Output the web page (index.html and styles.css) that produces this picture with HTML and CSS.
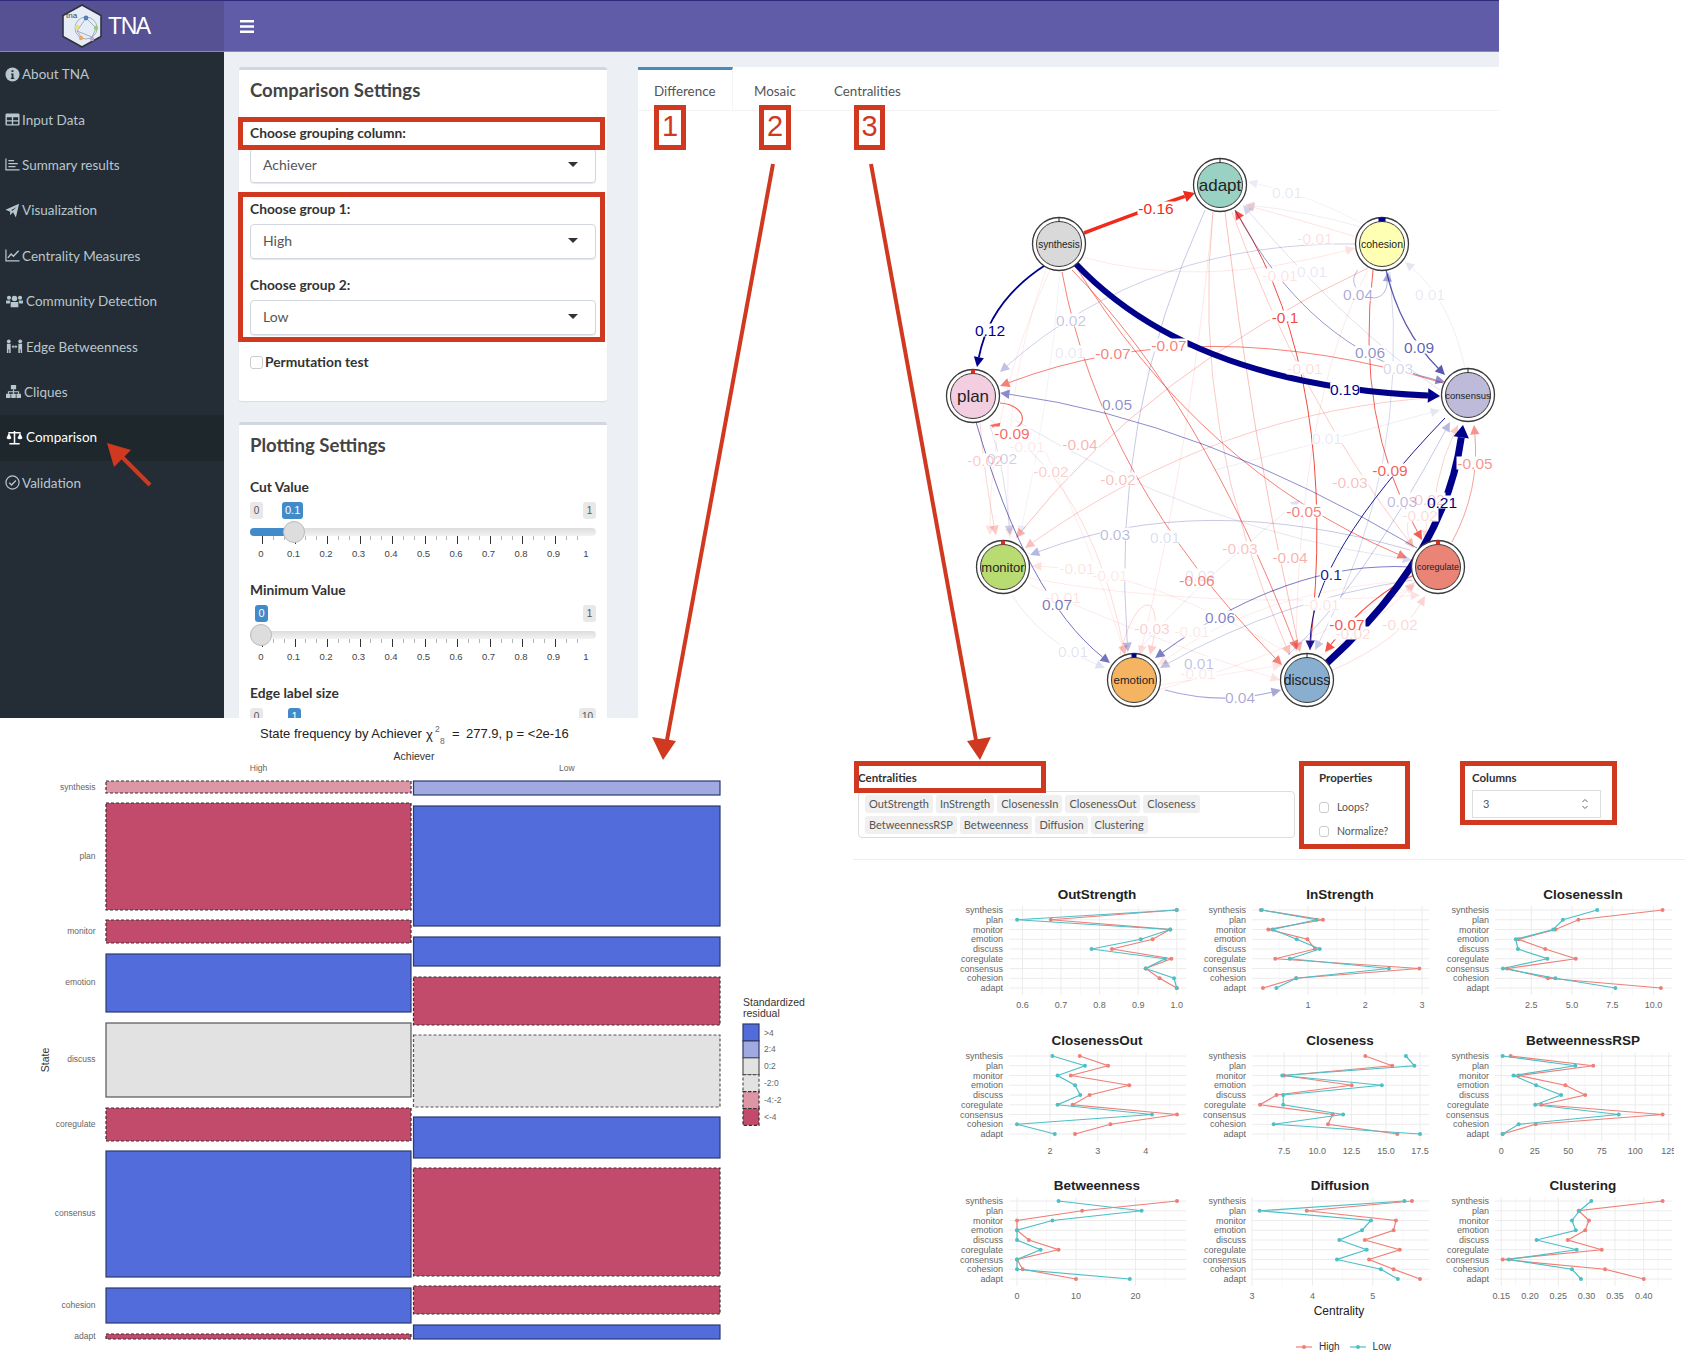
FILE: index.html
```html
<!DOCTYPE html>
<html lang="en">
<head>
  <meta charset="UTF-8">
  <title>TNA - Comparison</title>
  <link rel="stylesheet" href="styles.css">
</head>
<body>
<div class="page">

  <!-- App screenshot part -->
  <div class="app">
    <header class="topbar">
      <div class="brand">
        <svg class="brand-logo" viewBox="0 0 40 44">
          <polygon points="20,1 39,11.5 39,32.5 20,43 1,32.5 1,11.5" fill="#e6edf6" stroke="#2c3440" stroke-width="1.6"/>
          <g fill="none" stroke="#8492aa" stroke-width="0.7">
            <circle cx="24" cy="24" r="11"/>
            <path d="M24 14 L15 27 L30 33 L34 24 L24 14 M15 27 L20 34"/>
          </g>
          <circle cx="24" cy="14" r="2.4" fill="#4f7fb5"/>
          <circle cx="15" cy="23" r="2.2" fill="#e6e27a"/>
          <circle cx="34" cy="24" r="2.2" fill="#9ccb6b"/>
          <circle cx="19" cy="34" r="2.2" fill="#f2a65a"/>
          <circle cx="30" cy="35" r="2.2" fill="#b9a7d6"/>
          <text class="logo-text" x="4" y="14">tna</text>
        </svg>
        <span class="brand-name">TNA</span>
      </div>
      <div class="topnav">
        <svg class="menu-toggle" viewBox="0 0 14 13">
          <path d="M0 0h14v2.6H0zM0 5.2h14v2.6H0zM0 10.4h14V13H0z" fill="#fff"/>
        </svg>
      </div>
    </header>

    <div class="app-body">
      <aside class="sidebar">
        <ul class="side-menu">
          <li>
            <svg class="nav-icon" viewBox="0 0 16 16"><circle cx="8" cy="8" r="7.5" fill="currentColor"/><path d="M7 3.4h2v2H7zM6.6 6.8h2.4v4.6h.9v1.4H6.2v-1.4h.9V8.2h-.5z" fill="#242d35"/></svg>
            About TNA
          </li>
          <li>
            <svg class="nav-icon" viewBox="0 0 16 16"><rect x="0.5" y="1.5" width="15" height="13" rx="1.5" fill="currentColor"/><path d="M2 5.5h5.3v3.2H2zM8.7 5.5H14v3.2H8.7zM2 10h5.3v3H2zM8.7 10H14v3H8.7z" fill="#242d35"/></svg>
            Input Data
          </li>
          <li>
            <svg class="nav-icon" viewBox="0 0 16 16"><path d="M1 1.5v12.2h14.5" fill="none" stroke="currentColor" stroke-width="1.3"/><path d="M3.6 3.2h6v1.4h-6zM3.6 6.4h10v1.4h-10zM3.6 9.6h7.6V11H3.6z" fill="currentColor"/></svg>
            Summary results
          </li>
          <li>
            <svg class="nav-icon" viewBox="0 0 16 16"><path d="M0.5 7.2 15 0.8 11.6 15.4 8.6 9.8 5.2 13 5.6 9.2zM8 8.2 12.6 4.2 6.4 7.6z" fill="currentColor" fill-rule="evenodd"/></svg>
            Visualization
          </li>
          <li>
            <svg class="nav-icon" viewBox="0 0 16 16"><path d="M1 1.5v12.2h14.5" fill="none" stroke="currentColor" stroke-width="1.3"/><path d="M3 10.5 6.5 6.5 9 8.8 14.5 3" fill="none" stroke="currentColor" stroke-width="1.5"/></svg>
            Centrality Measures
          </li>
          <li>
            <svg class="nav-icon nav-icon-wide" viewBox="0 0 19 16"><g fill="currentColor"><circle cx="3.6" cy="4" r="2.2"/><circle cx="15.4" cy="4" r="2.2"/><circle cx="9.5" cy="4.8" r="2.9"/><path d="M0.5 6.8h4.6L4.4 10H0.5zM13.9 6.8h4.6V10h-3.9zM5.4 8.6h8.2v5.6H5.4z"/></g></svg>
            Community Detection
          </li>
          <li>
            <svg class="nav-icon nav-icon-wide" viewBox="0 0 19 16"><g fill="currentColor"><circle cx="3.4" cy="2.4" r="2"/><circle cx="15.6" cy="2.4" r="2"/><path d="M1.4 5h4v10h-1.6v-4H3v4H1.4zM13.6 5h4v10H16v-4h-.8v4h-1.6z"/><path d="M6.4 8.2 8.4 6.2v1.4h2.2V6.2l2 2-2 2V8.8H8.4v1.4z"/></g></svg>
            Edge Betweenness
          </li>
          <li>
            <svg class="nav-icon nav-icon-mid" viewBox="0 0 17 16"><g fill="currentColor"><rect x="5.7" y="1" width="5.6" height="4.6" rx="0.6"/><rect x="0.5" y="10.4" width="4.8" height="4.6" rx="0.6"/><rect x="6.1" y="10.4" width="4.8" height="4.6" rx="0.6"/><rect x="11.7" y="10.4" width="4.8" height="4.6" rx="0.6"/><path d="M7.9 5.6h1.2v2h5.4v2.8h-1.2V8.8H9.1v1.6H7.9V8.8H3.7v1.6H2.5V7.6h5.4z"/></g></svg>
            Cliques
          </li>
          <li class="active">
            <svg class="nav-icon nav-icon-wide" viewBox="0 0 19 16"><path d="M9.5 1v13M4 14.6h11M3 3h13" fill="none" stroke="currentColor" stroke-width="1.6"/><path d="M3.6 3 1 8.6a2.8 2.2 0 0 0 5.2 0zM15.4 3 12.8 8.6a2.8 2.2 0 0 0 5.2 0z" fill="currentColor"/></svg>
            Comparison
          </li>
          <li>
            <svg class="nav-icon" viewBox="0 0 16 16"><circle cx="8" cy="8" r="7" fill="none" stroke="currentColor" stroke-width="1.3"/><path d="M4.6 8.2 7 10.6 11.6 5.8" fill="none" stroke="currentColor" stroke-width="1.4"/></svg>
            Validation
          </li>
        </ul>
      </aside>

      <section class="settings">
        <div class="box">
          <h3 class="box-title">Comparison Settings</h3>
          <label class="field-label field-first">Choose grouping column:</label>
          <div class="select-box">Achiever<span class="caret"></span></div>
          <label class="field-label">Choose group 1:</label>
          <div class="select-box">High<span class="caret"></span></div>
          <label class="field-label">Choose group 2:</label>
          <div class="select-box">Low<span class="caret"></span></div>
          <label class="check-row"><input type="checkbox" class="check"> Permutation test</label>
        </div>

        <div class="box">
          <h3 class="box-title">Plotting Settings</h3>

          <label class="field-label field-slider">Cut Value</label>
          <div class="slider">
            <div class="slider-badges">
              <span class="badge">0</span><span class="badge">1</span>
              <span class="badge badge-value value-cut">0.1</span>
            </div>
            <div class="track"><div class="track-fill fill-cut"></div><div class="handle handle-cut"></div></div>
            <div class="ticks"></div>
            <div class="tick-labels">
              <span>0</span><span>0.1</span><span>0.2</span><span>0.3</span><span>0.4</span><span>0.5</span><span>0.6</span><span>0.7</span><span>0.8</span><span>0.9</span><span>1</span>
            </div>
          </div>

          <label class="field-label field-slider">Minimum Value</label>
          <div class="slider">
            <div class="slider-badges">
              <span class="badge badge-hidden">0</span><span class="badge">1</span>
              <span class="badge badge-value value-min">0</span>
            </div>
            <div class="track"><div class="handle handle-min"></div></div>
            <div class="ticks"></div>
            <div class="tick-labels">
              <span>0</span><span>0.1</span><span>0.2</span><span>0.3</span><span>0.4</span><span>0.5</span><span>0.6</span><span>0.7</span><span>0.8</span><span>0.9</span><span>1</span>
            </div>
          </div>

          <label class="field-label field-slider">Edge label size</label>
          <div class="slider">
            <div class="slider-badges">
              <span class="badge">0</span><span class="badge">10</span>
              <span class="badge badge-value value-size">1</span>
            </div>
          </div>
        </div>
      </section>

      <section class="tabs-panel">
        <div class="tab-bar">
          <a class="tab active">Difference</a>
          <a class="tab">Mosaic</a>
          <a class="tab">Centralities</a>
        </div>
        <svg id="networkPlot" class="network" viewBox="638 111 862 607"></svg>
      </section>
    </div>
  </div>

  <!-- Plots pasted below the app -->
  <div class="lower">
    <div class="mosaic">
      <svg id="mosaicPlot" viewBox="0 718 850 648"></svg>
    </div>

    <div class="centralities">
      <div class="cent-controls">
        <div class="cent-field">
          <label class="mini-label">Centralities</label>
          <div class="multi-select">
            <div class="tag-row">
              <span class="tag">OutStrength</span>
              <span class="tag">InStrength</span>
              <span class="tag">ClosenessIn</span>
              <span class="tag">ClosenessOut</span>
              <span class="tag">Closeness</span>
            </div>
            <div class="tag-row">
              <span class="tag">BetweennessRSP</span>
              <span class="tag">Betweenness</span>
              <span class="tag">Diffusion</span>
              <span class="tag">Clustering</span>
            </div>
          </div>
        </div>
        <div class="cent-props">
          <label class="mini-label">Properties</label>
          <label class="mini-check"><input type="checkbox" class="check"> Loops?</label>
          <label class="mini-check"><input type="checkbox" class="check"> Normalize?</label>
        </div>
        <div class="cent-columns">
          <label class="mini-label">Columns</label>
          <div class="number-box">3
            <svg class="spinner" viewBox="0 0 8 14"><path d="M1.5 5 4 2.5 6.500 5M1.500 9 4 11.500 6.500 9" fill="none" stroke="#666" stroke-width="1"/></svg>
          </div>
        </div>
      </div>
      <hr class="cent-rule">
      <div id="centGrid" class="cent-grid"></div>
      <div class="cent-xlabel">Centrality</div>
      <div class="cent-legend">
        <svg class="legend-key" viewBox="0 0 16 6"><path d="M0 3h16" stroke="#ee7f77" stroke-width="1.2"/><circle cx="8" cy="3" r="2" fill="#ee7f77"/></svg>
        <span>High</span>
        <svg class="legend-key" viewBox="0 0 16 6"><path d="M0 3h16" stroke="#4dbfc5" stroke-width="1.2"/><circle cx="8" cy="3" r="2" fill="#4dbfc5"/></svg>
        <span>Low</span>
      </div>
    </div>
  </div>

  <!-- Red call-outs on top of everything -->
  <svg class="annotations" viewBox="0 0 1690 1366">
    <g class="call-box">
      <rect x="240.5" y="119.5" width="362" height="28"/>
      <rect x="240.5" y="194.5" width="362" height="145"/>
      <rect x="856.5" y="763.5" width="187" height="27"/>
      <rect x="1301.5" y="763.5" width="106" height="83"/>
      <rect x="1462.5" y="763.5" width="152" height="59"/>
      <rect x="656.5" y="107.5" width="27" height="40"/>
      <rect x="761.5" y="107.5" width="27" height="40"/>
      <rect x="856.5" y="107.5" width="26" height="40"/>
    </g>
    <g class="call-num">
      <text x="670" y="136">1</text>
      <text x="775" y="136">2</text>
      <text x="869.5" y="136">3</text>
    </g>
    <g class="call-arrow">
      <path d="M150 485 118 453"/>
      <polygon points="107,443 131,450 114,467"/>
      <path d="M773 164 667 740"/>
      <polygon points="663,760 652,737 676,741"/>
      <path d="M871 164 976 740"/>
      <polygon points="980,760 967,741 991,737"/>
    </g>
  </svg>
</div>
<script src="script.js"></script>
</body>
</html>
```

FILE: styles.css
```css
body {
  margin: 0;
  background: #fff;
  font-family: Lato, "Open Sans", sans-serif;
  color: #333;
}
.page {
  position: relative;
  width: 1690px;
  height: 1366px;
  overflow: hidden;
}

/* app */
.app {
  width: 1499px;
  height: 718px;
  overflow: hidden;
  background: #ecf0f5;
}
.topbar {
  display: flex;
  height: 52px;
  box-sizing: border-box;
  border-top: 1px solid #2f2b7c;
  border-bottom: 1px solid #8a87c0;
  background: #605ca8;
}
.brand {
  width: 224px;
  display: flex;
  align-items: center;
  justify-content: flex-start;
  padding-left: 62px;
  box-sizing: border-box;
  gap: 6px;
  background: #555193;
}
.brand-logo {
  width: 40px;
  height: 44px;
}
.logo-text {
  font-family: "Liberation Sans", sans-serif;
  font-size: 8px;
  fill: #444;
}
.brand-name {
  font-family: "Liberation Sans", sans-serif;
  font-size: 23px;
  letter-spacing: -1.4px;
  color: #fff;
}
.topnav {
  display: flex;
  align-items: center;
  padding-left: 16px;
}
.menu-toggle {
  width: 14px;
  height: 13px;
}
.app-body {
  display: flex;
  height: 666px;
}

/* sidebar */
.sidebar {
  width: 224px;
  flex: none;
  background: #242d35;
}
.side-menu {
  list-style: none;
  margin: 0;
  padding: 0;
}
.side-menu li {
  display: flex;
  align-items: center;
  height: 45.4px;
  box-sizing: border-box;
  padding: 0 0 1px 5px;
  gap: 2px;
  font-size: 13.5px;
  color: #b8c7ce;
}
.side-menu li.active {
  background: #1e272c;
  color: #fff;
}
.nav-icon {
  width: 15px;
  height: 15px;
  flex: none;
}
.nav-icon-wide {
  width: 19px;
}
.nav-icon-mid {
  width: 17px;
}

/* settings column */
.settings {
  width: 414px;
  flex: none;
  box-sizing: border-box;
  padding: 15px 31px 0 15px;
}
.box {
  background: #fff;
  border-top: 3px solid #d2d6de;
  border-radius: 3px;
  box-shadow: 0 1px 1px rgba(0,0,0,0.08);
  padding: 10px 11px 30px;
  margin-bottom: 21px;
}
.box-title {
  margin: 0;
  font-size: 18.6px;
  line-height: 20px;
  font-weight: 700;
  color: #444;
}
.field-label {
  display: block;
  margin: 17px 0 6px;
  font-size: 13.8px;
  line-height: 18px;
  font-weight: 700;
  color: #333;
}
.field-first {
  margin-top: 24px;
}
.field-slider {
  margin: 0 0 6px;
}
.box-title + .field-slider {
  margin-top: 23px;
}
.select-box {
  position: relative;
  height: 35px;
  box-sizing: border-box;
  padding-left: 12px;
  border: 1px solid #d2d6de;
  border-radius: 4px;
  box-shadow: 0 1px 1px rgba(0,0,0,0.1);
  font-size: 14px;
  line-height: 32px;
  color: #555;
}
.caret {
  position: absolute;
  right: 17px;
  top: 13px;
  border-left: 5px solid transparent;
  border-right: 5px solid transparent;
  border-top: 5px solid #333;
}
.check {
  appearance: none;
  width: 13px;
  height: 13px;
  margin: 0;
  border: 1px solid #ccc;
  border-radius: 3px;
  background: #fff;
}
.check-row {
  display: flex;
  align-items: center;
  gap: 2px;
  margin-top: 18px;
  font-size: 13.8px;
  line-height: 18px;
  font-weight: 700;
}

/* range slider */
.slider {
  height: 79px;
}
.slider-badges {
  position: relative;
  display: flex;
  justify-content: space-between;
  height: 17px;
}
.badge {
  padding: 0 3px;
  min-width: 7px;
  background: #e8e8e8;
  border-radius: 3px;
  font-family: "Liberation Sans", sans-serif;
  font-size: 10px;
  line-height: 17px;
  text-align: center;
  color: #555;
}
.badge-hidden {
  visibility: hidden;
}
.badge-value {
  position: absolute;
  background: #428bca;
  color: #fff;
  font-size: 11px;
}
.value-cut { left: 32px; }
.value-min { left: 5px; }
.value-size { left: 38px; }
.track {
  position: relative;
  height: 8px;
  margin-top: 9px;
  background: linear-gradient(#ddd, #f2f2f2);
  border: 0;
  border-radius: 4px;
}
.track-fill {
  width: 44px;
  height: 8px;
  background: #428bca;
  border-radius: 4px 0 0 4px;
}
.handle {
  position: absolute;
  top: -7px;
  width: 22px;
  height: 22px;
  box-sizing: border-box;
  background: #ddd;
  border: 1px solid #bbb;
  border-radius: 50%;
}
.handle-cut { left: 33px; }
.handle-min { left: 0; }
.ticks {
  height: 8px;
  margin: 0 10px 0 12px;
  background-image:
    repeating-linear-gradient(90deg, #333 0 1px, transparent 1px 32.55px),
    repeating-linear-gradient(90deg, #b5b5b5 0 1px, transparent 1px 10.85px);
  background-size: 100% 8px, 100% 4px;
  background-repeat: no-repeat;
}
.tick-labels {
  display: flex;
  justify-content: space-between;
  margin: 4px 10px 0 11px;
  font-family: "Liberation Sans", sans-serif;
  font-size: 9.5px;
  line-height: 12px;
  color: #444;
}
.tick-labels span {
  width: 0;
  display: flex;
  justify-content: center;
}

/* tabs + network */
.tabs-panel {
  width: 861px;
  flex: none;
  margin-top: 15px;
  background: #fff;
}
.tab-bar {
  display: flex;
  height: 44px;
  box-sizing: border-box;
  border-bottom: 1px solid #f4f4f4;
}
.tab {
  padding: 0 19px;
  border-top: 3px solid transparent;
  font-size: 13.4px;
  line-height: 43px;
  color: #555;
}
.tab.active {
  width: 95px;
  padding: 0 0 0 16px;
  box-sizing: border-box;
  border-top-color: #4a8bbd;
  border-right: 1px solid #f4f4f4;
  border-bottom: 1px solid #fff;
}
.tab.active + .tab {
  margin-left: 2px;
}
.network {
  display: block;
  width: 862px;
  height: 607px;
}
.edge {
  fill: none;
}
.edge-label {
  font-family: "Liberation Sans", sans-serif;
  font-size: 15.5px;
  text-anchor: middle;
  dominant-baseline: central;
}
.edge-label-bg {
  fill: #fff;
}
.node-ring {
  fill: #fff;
  stroke: #3a3a3a;
  stroke-width: 1.3;
}
.node-core {
  stroke: #3a3a3a;
  stroke-width: 1;
}
.node-label {
  font-family: "Liberation Sans", sans-serif;
  text-anchor: middle;
  dominant-baseline: central;
  fill: #222;
}

/* lower half */
.lower {
  display: flex;
  height: 648px;
}
.mosaic {
  width: 850px;
  flex: none;
}
.mosaic svg {
  display: block;
  width: 850px;
  height: 648px;
}
.mosaic-title {
  font-family: "Liberation Sans", sans-serif;
  font-size: 13px;
  fill: #222;
}
.mosaic-small {
  font-family: "Liberation Sans", sans-serif;
  font-size: 8.5px;
  fill: #666;
  dominant-baseline: central;
}
.mosaic-axis {
  font-family: "Liberation Sans", sans-serif;
  font-size: 10.5px;
  fill: #333;
  dominant-baseline: central;
}
.middle { text-anchor: middle; }
.end { text-anchor: end; }

.centralities {
  width: 840px;
  flex: none;
}
.cent-controls {
  display: flex;
  padding: 52px 0 0 8px;
  height: 68px;
}
.cent-field {
  width: 437px;
  flex: none;
}
.mini-label {
  display: block;
  font-size: 11.5px;
  line-height: 16px;
  font-weight: 700;
  color: #333;
}
.multi-select {
  height: 47px;
  margin-top: 5px;
  padding: 3px 6px;
  box-sizing: border-box;
  border: 1px solid #ddd;
  border-radius: 4px;
}
.tag-row {
  display: flex;
  gap: 3px;
  margin-bottom: 3px;
}
.tag {
  height: 18px;
  padding: 0 4px;
  background: #f0f0f0;
  border-radius: 3px;
  font-size: 11px;
  line-height: 18px;
  color: #555;
}
.cent-props {
  width: 153px;
  flex: none;
  margin-left: 24px;
}
.mini-check {
  display: flex;
  align-items: center;
  gap: 8px;
  height: 16px;
  margin-top: 8px;
  font-size: 10.5px;
  color: #555;
}
.cent-props .mini-label + .mini-check {
  margin-top: 13px;
}
.mini-check .check {
  width: 10px;
  height: 11px;
}
.cent-columns {
  width: 129px;
  flex: none;
}
.number-box {
  position: relative;
  height: 28px;
  margin-top: 4px;
  padding-left: 10px;
  box-sizing: border-box;
  border: 1px solid #ddd;
  font-size: 11px;
  line-height: 26px;
  color: #555;
}
.spinner {
  position: absolute;
  right: 11px;
  top: 6px;
  width: 8px;
  height: 14px;
}
.cent-rule {
  margin: 21px 5px 20px 3px;
  border: 0;
  border-top: 1px solid #eee;
}
.cent-grid {
  display: grid;
  grid-template-columns: repeat(3, 243px);
  grid-auto-rows: 145.5px;
  margin-left: 95px;
  height: 425px;
}
.cent-grid svg {
  display: block;
  width: 243px;
  height: 145.5px;
}
.grid-major { stroke: #ececec; stroke-width: 1; }
.grid-minor { stroke: #f5f5f5; stroke-width: 0.7; }
.plot-title {
  font-family: "Liberation Sans", sans-serif;
  font-size: 13.5px;
  font-weight: 700;
  fill: #222;
  text-anchor: middle;
  dominant-baseline: central;
}
.plot-text {
  font-family: "Liberation Sans", sans-serif;
  font-size: 9px;
  fill: #666;
  dominant-baseline: central;
}
.cent-xlabel {
  margin: -1px 0 0 0;
  padding-left: 396px;
  width: 186px;
  text-align: center;
  font-family: "Liberation Sans", sans-serif;
  font-size: 12px;
  line-height: 14px;
  color: #222;
}
.cent-legend {
  display: flex;
  align-items: center;
  gap: 7px;
  margin-top: 23px;
  padding-left: 446px;
  font-family: "Liberation Sans", sans-serif;
  font-size: 10px;
  color: #333;
}
.legend-key {
  width: 16px;
  height: 6px;
}
.cent-legend span + .legend-key {
  margin-left: 3px;
}

/* call-outs */
.annotations {
  position: absolute;
  left: 0;
  top: 0;
  width: 1690px;
  height: 1366px;
  pointer-events: none;
}
.call-box rect {
  fill: none;
  stroke: #d0391f;
  stroke-width: 5;
}
.call-num text {
  font-family: "Liberation Sans", sans-serif;
  font-size: 29px;
  text-anchor: middle;
  fill: #d0391f;
}
.call-arrow path {
  fill: none;
  stroke: #d0391f;
  stroke-width: 4;
}
.call-arrow polygon {
  fill: #d0391f;
}
```

FILE: script.js
```js
// Small helper for svg elements
const NS = 'http://www.w3.org/2000/svg';
function el(parent, name, attrs, txt) {
  const node = document.createElementNS(NS, name);
  for (const k in attrs) node.setAttribute(k, attrs[k]);
  if (txt !== undefined) node.textContent = txt;
  parent.appendChild(node);
  return node;
}

// ---- network ----
const BLUE = '#00008b';
const RED = '#f02a1c';

// [points, width, colour, opacity, label, labelX, labelY]
const edges = [
  // faint ones first
  ['1365 225 1310 195 1248 182', 0.7, BLUE, 0.08, '0.01', 1287, 192],
  ['1365 228 1300 210 1245 205', 0.7, BLUE, 0.1, '0.01', 1312, 271],
  ['1465 368 1450 300 1405 262', 0.7, BLUE, 0.1, '0.01', 1430, 294],
  ['1215 470 1330 440 1440 410', 0.7, BLUE, 0.1, '0.01', 1327, 438],
  ['1060 272 1050 400 1020 535', 0.7, BLUE, 0.08, '0.01', 1070, 352],
  ['1012 595 1040 640 1105 668', 0.7, BLUE, 0.12, '0.01', 1073, 651],
  ['1135 654 1190 590 1300 500', 0.7, BLUE, 0.12, '0.03', 1200, 575],
  ['1015 420 1200 530 1412 560', 0.7, BLUE, 0.15, '0.01', 1165, 537],
  ['1360 238 1300 220 1245 205', 0.8, RED, 0.16, '-0.01', 1315, 238],
  ['1082 257 1200 290 1355 248', 0.8, RED, 0.14, '-0.01', 1280, 275],
  ['1045 272 1000 400 1010 538', 0.7, RED, 0.12, '-0.01', 1027, 446],
  ['1050 270 990 400 990 535', 0.7, RED, 0.14, null],
  ['1300 660 1150 570 1032 566', 0.7, RED, 0.14, '-0.01', 1077, 568],
  ['1030 585 1150 640 1280 680', 0.7, RED, 0.14, '-0.01', 1063, 597],
  ['1028 578 1200 610 1420 595', 0.7, RED, 0.14, '-0.01', 1322, 604],
  ['1040 440 1090 540 1125 655', 0.7, RED, 0.12, '-0.01', 1110, 575],
  ['1160 685 1220 675 1282 665', 0.7, RED, 0.12, '-0.01', 1198, 673],
  ['1415 580 1260 590 1158 665', 0.7, RED, 0.12, '-0.01', 1192, 631],
  ['1158 690 1300 650 1415 585', 0.7, RED, 0.14, null],
  ['1368 270 1300 400 1296 652', 0.7, RED, 0.16, '-0.01', 1305, 368],
  ['1213 212 1190 450 1140 655', 0.7, RED, 0.16, null],
  ['1412 545 1395 510 1430 505 1425 540', 0.8, RED, 0.18, '-0.02', 1420, 515],
  ['1120 655 1135 590 1165 590 1150 655', 0.8, RED, 0.24, '-0.03', 1152, 628],
  ['1322 655 1380 620 1415 582', 0.8, RED, 0.18, '-0.02', 1353, 633],
  ['1333 670 1400 640 1425 596', 0.8, RED, 0.2, '-0.02', 1400, 624],
  ['1440 390 1350 330 1243 205', 0.7, BLUE, 0.18, '0.03', 1398, 368],
  ['1360 244 1150 240 1000 372', 0.8, BLUE, 0.24, '0.02', 1071, 320],
  ['990 425 1005 470 1010 535', 0.7, BLUE, 0.2, '0.02', 1002, 458],
  ['1410 550 1200 490 1030 555', 0.8, BLUE, 0.28, '0.03', 1115, 534],
  ['1288 655 1360 590 1450 422', 0.8, BLUE, 0.28, '0.03', 1402, 501],
  ['1390 272 1410 470 1315 650', 0.7, BLUE, 0.22, null],
  ['1412 580 1280 600 1160 668', 0.8, BLUE, 0.25, '0.01', 1199, 663],
  ['1205 210 1110 420 1128 652', 0.8, BLUE, 0.28, null],
  // medium
  ['1368 268 1150 370 1016 538', 0.8, RED, 0.36, '-0.04', 1080, 444],
  ['1442 397 1220 410 1025 548', 0.8, RED, 0.3, '-0.02', 1118, 479],
  ['980 423 985 480 996 535', 0.8, RED, 0.26, '-0.02', 985, 460],
  ['990 420 1090 480 1125 655', 0.7, RED, 0.24, '-0.02', 1051, 471],
  ['1213 212 1190 430 1290 655', 0.8, RED, 0.3, '-0.03', 1240, 548],
  ['1232 212 1300 400 1414 548', 0.8, RED, 0.3, '-0.03', 1350, 482],
  ['1432 540 1432 480 1458 425', 0.8, RED, 0.26, '-0.02', 1427, 499],
  ['1225 212 1250 430 1300 652', 0.8, RED, 0.38, '-0.04', 1290, 557],
  ['1452 542 1480 490 1474 425', 0.9, RED, 0.5, '-0.05', 1475, 463],
  ['1358 270 1340 290 1385 315 1388 272', 0.8, BLUE, 0.35, '0.04', 1358, 294],
  // stronger
  ['1062 272 1100 480 1282 665', 1, RED, 0.6, '-0.06', 1197, 580],
  ['1072 270 1200 400 1297 650', 1, RED, 0.6, '-0.07', 1169, 345],
  ['1443 383 1200 310 1000 386', 1, RED, 0.6, '-0.07', 1113, 353],
  ['1073 262 1200 470 1407 558', 1, RED, 0.6, '-0.05', 1304, 511],
  ['1373 270 1355 420 1422 540', 1, RED, 0.75, '-0.09', 1390, 470],
  ['1310 650 1340 380 1235 210', 1, RED, 0.85, '-0.1', 1285, 317],
  ['1000 403 1030 405 1030 435 990 425', 1.1, RED, 0.7, '-0.09', 1012, 433],
  ['1420 572 1370 595 1325 652', 1.2, RED, 0.8, '-0.07', 1347, 624],
  ['1417 548 1200 420 1000 393', 1, BLUE, 0.45, '0.05', 1117, 404],
  ['1235 210 1310 350 1445 382', 0.9, BLUE, 0.45, '0.06', 1370, 352],
  ['1412 567 1290 560 1155 658', 1.1, BLUE, 0.5, '0.06', 1220, 617],
  ['976 422 1027 597 1110 663', 1, BLUE, 0.55, '0.07', 1057, 604],
  ['1165 690 1220 705 1281 690', 1.1, BLUE, 0.35, '0.04', 1240, 697],
  ['1386 270 1400 330 1445 375', 1.2, BLUE, 0.65, '0.09', 1419, 347],
  ['1445 418 1312 556 1310 650', 1, BLUE, 0.9, '0.1', 1331, 574],
  ['1047 264 990 300 977 367', 1.8, BLUE, 1, '0.12', 990, 330],
  ['1084 233 1150 208 1195 193', 3.5, RED, 1, '-0.16', 1156, 208],
  ['1075 263 1190 385 1440 396', 6, BLUE, 1, '0.19', 1345, 389],
  ['1327 663 1445 556 1463 425', 7, BLUE, 1, '0.21', 1442, 502]
];

const nodes = [
  { name: 'adapt', x: 1220, y: 185, fill: '#99d1c3', size: 17, mark: '#222', mw: 1 },
  { name: 'synthesis', x: 1059, y: 244, fill: '#d9d9d9', size: 10, mark: '#222', mw: 1 },
  { name: 'cohesion', x: 1382, y: 244, fill: '#ffffb3', size: 10.5, mark: BLUE, mw: 7 },
  { name: 'plan', x: 973, y: 396, fill: '#f2cee0', size: 17, mark: '#e02a1c', mw: 4 },
  { name: 'consensus', x: 1468, y: 395, fill: '#bebada', size: 9.5, mark: '#222', mw: 1 },
  { name: 'monitor', x: 1003, y: 567, fill: '#b9dc72', size: 13, mark: '#e02a1c', mw: 4 },
  { name: 'coregulate', x: 1438, y: 567, fill: '#ea8477', size: 9, mark: '#e02a1c', mw: 4 },
  { name: 'emotion', x: 1134, y: 680, fill: '#f4b462', size: 11.5, mark: BLUE, mw: 5 },
  { name: 'discuss', x: 1307, y: 680, fill: '#88afd0', size: 14, mark: '#222', mw: 1 }
];

function drawNetwork() {
  const svg = document.getElementById('networkPlot');
  edges.forEach(e => {
    const p = e[0].split(' ').map(Number);
    const n = p.length;
    const w = e[1];
    const tx = p[n - 2], ty = p[n - 1];
    const dx = tx - p[n - 4], dy = ty - p[n - 3];
    const len = Math.hypot(dx, dy) || 1;
    const ux = dx / len, uy = dy / len;
    const head = 9 + w * 0.5;
    const half = 4.2 + w * 0.5;
    const bx = tx - ux * head, by = ty - uy * head;
    const cmd = n === 6 ? 'Q' : 'C';
    const d = `M${p[0]} ${p[1]} ${cmd}${p.slice(2, n - 2).join(' ')} ${bx} ${by}`;
    el(svg, 'path', { class: 'edge', d: d, stroke: e[2], 'stroke-width': w, 'stroke-opacity': e[3] });
    el(svg, 'polygon', {
      points: `${tx},${ty} ${bx - uy * half},${by + ux * half} ${bx + uy * half},${by - ux * half}`,
      fill: e[2], 'fill-opacity': e[3]
    });
  });
  // labels sit on a white patch that breaks the edge
  const labelled = edges.filter(e => e[4]);
  labelled.forEach(e => {
    const w = e[4].length * 7.4;
    el(svg, 'rect', { class: 'edge-label-bg', x: e[5] - w / 2, y: e[6] - 6.5, width: w, height: 13 });
  });
  labelled.forEach(e => {
    el(svg, 'text', { class: 'edge-label', x: e[5], y: e[6], fill: e[2], 'fill-opacity': Math.max(e[3], 0.1) }, e[4]);
  });
  nodes.forEach(n => {
    el(svg, 'circle', { class: 'node-ring', cx: n.x, cy: n.y, r: 26.5 });
    el(svg, 'circle', { class: 'node-core', cx: n.x, cy: n.y, r: 22.5, fill: n.fill });
    el(svg, 'rect', { x: n.x - n.mw / 2, y: n.y - 26.5, width: n.mw, height: 4, fill: n.mark });
    el(svg, 'text', { class: 'node-label', x: n.x, y: n.y, 'font-size': n.size }, n.name);
  });
}

// ---- mosaic ----
const residual = {
  high: { fill: '#526cdb', stroke: '#2c3a6e' },
  mid: { fill: '#a0a9e0', stroke: '#2c3a6e' },
  zero: { fill: '#e2e2e2', stroke: '#555' },
  zeroNeg: { fill: '#e2e2e2', stroke: '#555', dash: true },
  midNeg: { fill: '#dd96a6', stroke: '#333', dash: true },
  low: { fill: '#c24b6b', stroke: '#333', dash: true }
};

const mosaicCols = [
  { x: 106, w: 305, label: 'High', cells: [
    [781, 793, 'midNeg'], [803, 910, 'low'], [920, 943, 'low'], [954, 1012, 'high'], [1023, 1097, 'zero'],
    [1108, 1141, 'low'], [1151, 1277, 'high'], [1288, 1323, 'high'], [1334, 1339, 'low']
  ] },
  { x: 413.5, w: 306.5, label: 'Low', cells: [
    [781, 795, 'mid'], [806, 926, 'high'], [937, 966, 'high'], [977, 1025, 'low'], [1035, 1107, 'zeroNeg'],
    [1117, 1158, 'high'], [1168, 1276, 'low'], [1286, 1314, 'low'], [1325, 1339, 'high']
  ] }
];

const mosaicRows = [
  ['synthesis', 787], ['plan', 856], ['monitor', 931], ['emotion', 982], ['discuss', 1059],
  ['coregulate', 1124], ['consensus', 1213], ['cohesion', 1305], ['adapt', 1336]
];

const mosaicLegend = [
  ['high', '>4'], ['mid', '2:4'], ['zero', '0:2'], ['zeroNeg', '-2:0'], ['midNeg', '-4:-2'], ['low', '<-4']
];

function drawCell(svg, x, y, w, h, kind) {
  const s = residual[kind];
  const attrs = { x: x, y: y, width: w, height: h, fill: s.fill, stroke: s.stroke, 'stroke-width': 1.2 };
  if (s.dash) attrs['stroke-dasharray'] = '3 2';
  el(svg, 'rect', attrs);
}

function drawMosaic() {
  const svg = document.getElementById('mosaicPlot');
  el(svg, 'text', { class: 'mosaic-title', x: 260, y: 738 }, 'State frequency by Achiever');
  el(svg, 'text', { class: 'mosaic-title', x: 426, y: 739 }, 'χ');
  el(svg, 'text', { class: 'mosaic-small', x: 435, y: 729 }, '2');
  el(svg, 'text', { class: 'mosaic-small', x: 440, y: 741 }, '8');
  el(svg, 'text', { class: 'mosaic-title', x: 452, y: 738 }, '=');
  el(svg, 'text', { class: 'mosaic-title', x: 466, y: 738 }, '277.9, p = <2e-16');
  el(svg, 'text', { class: 'mosaic-axis middle', x: 414, y: 756 }, 'Achiever');

  mosaicCols.forEach(col => {
    el(svg, 'text', { class: 'mosaic-small middle', x: col.x + col.w / 2, y: 768 }, col.label);
    col.cells.forEach(c => drawCell(svg, col.x, c[0], col.w, c[1] - c[0], c[2]));
  });
  mosaicRows.forEach(r => {
    el(svg, 'text', { class: 'mosaic-small end', x: 95.5, y: r[1] }, r[0]);
  });
  el(svg, 'text', { class: 'mosaic-axis middle', x: 45, y: 1060, transform: 'rotate(-90 45 1060)' }, 'State');

  el(svg, 'text', { class: 'mosaic-axis', x: 743, y: 1002 }, 'Standardized');
  el(svg, 'text', { class: 'mosaic-axis', x: 743, y: 1013 }, 'residual');
  mosaicLegend.forEach((l, i) => {
    const y = 1024 + i * 16.9;
    drawCell(svg, 743, y, 16, 16.9, l[0]);
    el(svg, 'text', { class: 'mosaic-small', x: 764, y: y + 8.5 }, l[1]);
  });
}

// ---- centrality small multiples ----
const states = ['synthesis', 'plan', 'monitor', 'emotion', 'discuss', 'coregulate', 'consensus', 'cohesion', 'adapt'];

// x values are read in measured pixels: page x = origin + v / scale
const plots = [
  { title: 'OutStrength', origin: 850, scale: 1.867,
    ticks: [['0.6', 322], ['0.7', 394], ['0.8', 466], ['0.9', 538], ['1.0', 610]],
    high: [610, 375, 598, 565, 489, 600, 552, 578, 610],
    low: [610, 312, 598, 543, 451, 588, 552, 605, 610] },
  { title: 'InStrength', origin: 850, scale: 1.867,
    ticks: [['1', 855], ['2', 962], ['3', 1068]],
    high: [767, 883, 781, 854, 868, 794, 1063, 833, 771],
    low: [769, 871, 789, 834, 877, 821, 1006, 833, 796] },
  { title: 'ClosenessIn', origin: 850, scale: 1.867,
    ticks: [['2.5', 1272], ['5.0', 1348], ['7.5', 1423], ['10.0', 1500]],
    high: [1517, 1360, 1317, 1248, 1298, 1355, 1227, 1303, 1514],
    low: [1395, 1331, 1313, 1243, 1247, 1302, 1219, 1317, 1429] },
  { title: 'ClosenessOut', origin: 950, scale: 2.119,
    ticks: [['2', 212], ['3', 313], ['4', 415]],
    high: [275, 335, 256, 380, 296, 260, 481, 340, 265],
    low: [217, 286, 228, 265, 276, 228, 428, 142, 222] },
  { title: 'Closeness', origin: 950, scale: 2.119,
    ticks: [['7.5', 708], ['10.0', 778], ['12.5', 851], ['15.0', 924], ['17.5', 996]],
    high: [880, 937, 708, 851, 692, 657, 811, 801, 948],
    low: [966, 984, 704, 915, 706, 706, 833, 686, 996] },
  { title: 'BetweennessRSP', origin: 950, scale: 2.119,
    ticks: [['0', 1168], ['25', 1239], ['50', 1310], ['75', 1381], ['100', 1452], ['125', 1523]],
    high: [1188, 1363, 1205, 1304, 1346, 1253, 1510, 1241, 1171],
    low: [1171, 1325, 1194, 1242, 1295, 1240, 1417, 1205, 1171] },
  { title: 'Betweenness', origin: 950, scale: 2.119,
    ticks: [['0', 142], ['10', 267], ['20', 393]],
    high: [481, 280, 142, 142, 167, 230, 142, 154, 267],
    low: [230, 406, 217, 142, 142, 192, 142, 142, 381] },
  { title: 'Diffusion', origin: 950, scale: 2.119,
    ticks: [['3', 640], ['4', 768], ['5', 896]],
    high: [979, 756, 945, 940, 879, 953, 888, 940, 996],
    low: [963, 656, 892, 873, 825, 883, 820, 913, 949] },
  { title: 'Clustering', origin: 950, scale: 2.119,
    ticks: [['0.15', 1168], ['0.20', 1229], ['0.25', 1289], ['0.30', 1349], ['0.35', 1409], ['0.40', 1470]],
    high: [1510, 1332, 1354, 1346, 1309, 1381, 1171, 1388, 1470],
    low: [1359, 1334, 1318, 1326, 1243, 1328, 1184, 1318, 1337] }
];

function drawPlot(grid, p, index) {
  const svg = el(grid, 'svg', { viewBox: '0 0 243 145.5' });
  const left = 945 + (index % 3) * 243;
  const toX = v => p.origin + v / p.scale - left;
  const rowY = i => 30 + i * 9.75;
  const top = 26, bottom = 115, x0 = 64, x1 = 241;

  el(svg, 'text', { class: 'plot-title', x: 152, y: 14 }, p.title);

  // vertical grid, major and the minor half steps
  const t = p.ticks.map(k => toX(k[1]));
  const step = t[1] - t[0];
  for (let x = t[0] - step / 2; x >= x0; x -= step) {
    el(svg, 'line', { class: 'grid-minor', x1: x, x2: x, y1: top, y2: bottom });
  }
  t.forEach(x => {
    el(svg, 'line', { class: 'grid-major', x1: x, x2: x, y1: top, y2: bottom });
    if (x + step / 2 <= x1) el(svg, 'line', { class: 'grid-minor', x1: x + step / 2, x2: x + step / 2, y1: top, y2: bottom });
  });
  states.forEach((s, i) => {
    el(svg, 'line', { class: 'grid-major', x1: x0, x2: x1, y1: rowY(i), y2: rowY(i) });
    el(svg, 'text', { class: 'plot-text end', x: 58, y: rowY(i) }, s);
  });
  p.ticks.forEach((k, i) => {
    el(svg, 'text', { class: 'plot-text middle', x: t[i], y: 125 }, k[0]);
  });

  [[p.high, '#ee7f77'], [p.low, '#4dbfc5']].forEach(series => {
    const pts = series[0].map((v, i) => `${toX(v)},${rowY(i)}`).join(' ');
    el(svg, 'polyline', { points: pts, fill: 'none', stroke: series[1], 'stroke-width': 1.2 });
    series[0].forEach((v, i) => {
      el(svg, 'circle', { cx: toX(v), cy: rowY(i), r: 2, fill: series[1] });
    });
  });
}

drawNetwork();
drawMosaic();
const grid = document.getElementById('centGrid');
plots.forEach((p, i) => drawPlot(grid, p, i));
```
